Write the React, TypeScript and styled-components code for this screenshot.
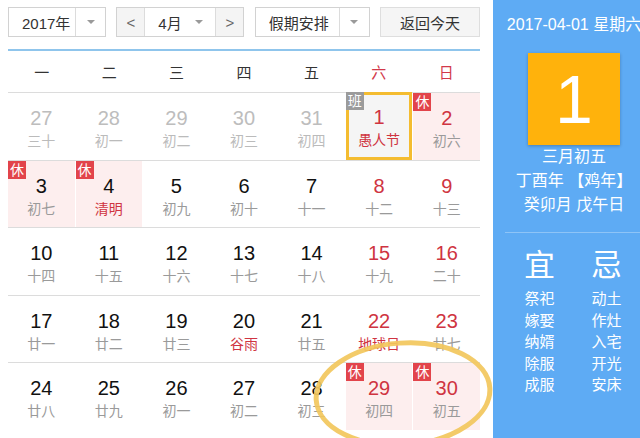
import styled, { createGlobalStyle } from "styled-components";

const GlobalStyle = createGlobalStyle`
  html, body {
    margin: 0;
    padding: 0;
    background: #fff;
  }
  body {
    font-family: "Liberation Sans", "Noto Sans CJK SC", sans-serif;
  }
`;

type Day = {
  n: number;
  lunar: string;
  other?: boolean;
  weekend?: boolean;
  festival?: boolean;
  rest?: boolean;
  work?: boolean;
  today?: boolean;
};

const weeks: Day[][] = [
  [
    { n: 27, lunar: "三十", other: true },
    { n: 28, lunar: "初一", other: true },
    { n: 29, lunar: "初二", other: true },
    { n: 30, lunar: "初三", other: true },
    { n: 31, lunar: "初四", other: true },
    { n: 1, lunar: "愚人节", weekend: true, festival: true, work: true, today: true },
    { n: 2, lunar: "初六", weekend: true, rest: true },
  ],
  [
    { n: 3, lunar: "初七", rest: true },
    { n: 4, lunar: "清明", rest: true, festival: true },
    { n: 5, lunar: "初九" },
    { n: 6, lunar: "初十" },
    { n: 7, lunar: "十一" },
    { n: 8, lunar: "十二", weekend: true },
    { n: 9, lunar: "十三", weekend: true },
  ],
  [
    { n: 10, lunar: "十四" },
    { n: 11, lunar: "十五" },
    { n: 12, lunar: "十六" },
    { n: 13, lunar: "十七" },
    { n: 14, lunar: "十八" },
    { n: 15, lunar: "十九", weekend: true },
    { n: 16, lunar: "二十", weekend: true },
  ],
  [
    { n: 17, lunar: "廿一" },
    { n: 18, lunar: "廿二" },
    { n: 19, lunar: "廿三" },
    { n: 20, lunar: "谷雨", festival: true },
    { n: 21, lunar: "廿五" },
    { n: 22, lunar: "地球日", weekend: true, festival: true },
    { n: 23, lunar: "廿七", weekend: true },
  ],
  [
    { n: 24, lunar: "廿八" },
    { n: 25, lunar: "廿九" },
    { n: 26, lunar: "初一" },
    { n: 27, lunar: "初二" },
    { n: 28, lunar: "初三" },
    { n: 29, lunar: "初四", weekend: true, rest: true },
    { n: 30, lunar: "初五", weekend: true, rest: true },
  ],
];

const weekdays = ["一", "二", "三", "四", "五", "六", "日"];
const good = ["祭祀", "嫁娶", "纳婿", "除服", "成服"];
const bad = ["动土", "作灶", "入宅", "开光", "安床"];

const App = () => {
  return (
    <>
      <GlobalStyle />
      <Page>
        <Main>
          <Toolbar>
            <Select $w={98}>
              <SelectText>2017年</SelectText>
              <ArrowBox>
                <Caret />
              </ArrowBox>
            </Select>
            <MonthGroup>
              <StepButton>&lt;</StepButton>
              <MonthSelect>
                <span>4月</span>
                <Caret />
              </MonthSelect>
              <StepButton>&gt;</StepButton>
            </MonthGroup>
            <Select $w={115}>
              <SelectText>假期安排</SelectText>
              <ArrowBox>
                <Caret />
              </ArrowBox>
            </Select>
            <TodayButton>返回今天</TodayButton>
          </Toolbar>
          <BlueRule />
          <WeekHeader>
            {weekdays.map((w, i) => (
              <WeekName key={w} $red={i >= 5}>
                {w}
              </WeekName>
            ))}
          </WeekHeader>
          {weeks.map((week, wi) => (
            <WeekRow key={wi}>
              {week.map((d, di) => (
                <Cell key={di} $rest={d.rest} $today={d.today}>
                  {d.rest && <Badge>休</Badge>}
                  {d.work && <Badge $work>班</Badge>}
                  <DayNum $other={d.other} $red={d.weekend && !d.other}>
                    {d.n}
                  </DayNum>
                  <Lunar $other={d.other} $red={d.festival}>
                    {d.lunar}
                  </Lunar>
                </Cell>
              ))}
            </WeekRow>
          ))}
          <Circle viewBox="0 0 493 438" width="493" height="438">
            <ellipse
              cx="403"
              cy="394"
              rx="87"
              ry="51"
              transform="rotate(-4 403 394)"
              fill="none"
              stroke="#f2c75c"
              strokeWidth="5"
              opacity="0.92"
            />
          </Circle>
        </Main>
        <Side>
          <DateLine>2017-04-01 星期六</DateLine>
          <BigDay>1</BigDay>
          <InfoLine>三月初五</InfoLine>
          <InfoLine>丁酉年 【鸡年】</InfoLine>
          <InfoLine>癸卯月 戊午日</InfoLine>
          <SideRule />
          <Almanac>
            <AlmanacCol>
              <AlmanacHead>宜</AlmanacHead>
              {good.map((g) => (
                <AlmanacItem key={g}>{g}</AlmanacItem>
              ))}
            </AlmanacCol>
            <AlmanacCol>
              <AlmanacHead>忌</AlmanacHead>
              {bad.map((b) => (
                <AlmanacItem key={b}>{b}</AlmanacItem>
              ))}
            </AlmanacCol>
          </Almanac>
        </Side>
      </Page>
    </>
  );
};
export default App;

const Page = styled.div`
  display: flex;
  width: 640px;
  height: 438px;
  overflow: hidden;
`;

const Main = styled.div`
  position: relative;
  flex: 0 0 493px;
  box-sizing: border-box;
  padding: 7px 13px 0 8px;
`;

const Toolbar = styled.div`
  display: flex;
  justify-content: space-between;
  height: 30px;
`;

const boxBase = `
  box-sizing: border-box;
  height: 30px;
  border: 1px solid #d2d2d2;
  font-size: 15px;
  color: #333;
  background: #fff;
`;

const Select = styled.div<{ $w: number }>`
  ${boxBase}
  width: ${(p) => p.$w}px;
  display: flex;
  align-items: center;
`;

const SelectText = styled.span`
  flex: 1;
  padding-left: 13px;
`;

const ArrowBox = styled.span`
  width: 29px;
  height: 100%;
  border-left: 1px solid #dcdcdc;
  display: flex;
  align-items: center;
  justify-content: center;
`;

const Caret = styled.i`
  display: inline-block;
  width: 0;
  height: 0;
  border-left: 4px solid transparent;
  border-right: 4px solid transparent;
  border-top: 4px solid #9a9a9a;
`;

const MonthGroup = styled.div`
  ${boxBase}
  width: 128px;
  display: flex;
`;

const StepButton = styled.span`
  width: 27px;
  background: #f4f4f4;
  display: flex;
  align-items: center;
  justify-content: center;
  color: #666;
  font-size: 15px;
`;

const MonthSelect = styled.span`
  flex: 1;
  display: flex;
  align-items: center;
  justify-content: space-between;
  padding: 0 12px 0 13px;
  border-left: 1px solid #dcdcdc;
  border-right: 1px solid #dcdcdc;
`;

const TodayButton = styled.div`
  ${boxBase}
  width: 100px;
  background: #f5f5f5;
  border-color: #dedede;
  display: flex;
  align-items: center;
  justify-content: center;
`;

const BlueRule = styled.div`
  height: 2px;
  margin-top: 12px;
  background: #8fc5ec;
`;

const WeekHeader = styled.div`
  display: grid;
  grid-template-columns: repeat(7, 1fr);
  height: 41px;
  align-items: center;
`;

const WeekName = styled.div<{ $red?: boolean }>`
  text-align: center;
  font-size: 15px;
  color: ${(p) => (p.$red ? "#d2394a" : "#333")};
`;

const WeekRow = styled.div`
  display: grid;
  grid-template-columns: repeat(7, 1fr);
  column-gap: 1px;
  height: 67.6px;
  box-sizing: border-box;
  border-top: 1px solid #dcdcdc;
`;

const Cell = styled.div<{ $rest?: boolean; $today?: boolean }>`
  position: relative;
  display: flex;
  flex-direction: column;
  align-items: center;
  box-sizing: border-box;
  padding-top: ${(p) => (p.$today ? 10 : 13)}px;
  background: ${(p) => (p.$today ? "#f5f5f5" : p.$rest ? "#fdeeee" : "transparent")};
  border: ${(p) => (p.$today ? "3px solid #f4bc30" : "none")};
  margin-top: ${(p) => (p.$today ? "-1px" : "0")};
`;

const Badge = styled.span<{ $work?: boolean }>`
  position: absolute;
  top: ${(p) => (p.$work ? "-3px" : "0")};
  left: ${(p) => (p.$work ? "-3px" : "0")};
  width: 18px;
  height: 18px;
  line-height: 18px;
  text-align: center;
  font-size: 14px;
  color: #fff;
  background: ${(p) => (p.$work ? "#9b9b9b" : "#e2444b")};
`;

const DayNum = styled.div<{ $other?: boolean; $red?: boolean }>`
  font-size: 20px;
  line-height: 24px;
  color: ${(p) => (p.$other ? "#bdbdbd" : p.$red ? "#cf3441" : "#111")};
`;

const Lunar = styled.div<{ $other?: boolean; $red?: boolean }>`
  font-size: 14px;
  line-height: 22px;
  color: ${(p) => (p.$red ? "#cf3441" : p.$other ? "#bbb" : "#9a9a9a")};
`;

const Circle = styled.svg`
  position: absolute;
  left: 0;
  top: 0;
  pointer-events: none;
`;

const Side = styled.div`
  flex: 0 0 162px;
  box-sizing: border-box;
  background: #5eabf4;
  color: #fff;
  display: flex;
  flex-direction: column;
  align-items: center;
  padding-top: 15px;
`;

const DateLine = styled.div`
  font-size: 16px;
  line-height: 20px;
  white-space: nowrap;
`;

const BigDay = styled.div`
  width: 92px;
  height: 92px;
  margin-top: 18px;
  background: #ffb20c;
  box-shadow: 0 1px 3px rgba(0, 0, 0, 0.25);
  font-size: 68px;
  line-height: 92px;
  text-align: center;
`;

const InfoLine = styled.div`
  font-size: 16px;
  line-height: 24px;
  white-space: nowrap;
  &:first-of-type {
    margin-top: 6px;
  }
`;

const SideRule = styled.div`
  align-self: stretch;
  margin: 15px 0 0 12px;
  height: 1px;
  background: rgba(255, 255, 255, 0.3);
`;

const Almanac = styled.div`
  align-self: stretch;
  display: grid;
  grid-template-columns: 67px 67px;
  padding-left: 13px;
  margin-top: 15px;
`;

const AlmanacCol = styled.div`
  display: flex;
  flex-direction: column;
  align-items: center;
`;

const AlmanacHead = styled.div`
  font-size: 31px;
  line-height: 36px;
  margin-bottom: 4px;
`;

const AlmanacItem = styled.div`
  font-size: 15px;
  line-height: 21.5px;
`;
